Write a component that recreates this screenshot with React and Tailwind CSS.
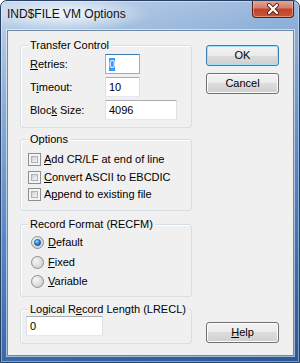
import React from "react";

const Field = ({ className = "", focused = false, children }) => (
  <div
    className={`h-[20px] flex items-center pl-[3px] bg-white border ${
      focused
        ? "border-[#7eb4ea] border-t-[#3d7bad]"
        : "border-[#dbdfe6] border-t-[#abadb3] border-b-[#e3e9ef]"
    } ${className}`}
  >
    {children}
  </div>
);

const Group = ({ label, className = "", children }) => (
  <div
    className={`relative w-[172px] rounded-[3px] border border-[#d5dfe5] shadow-[inset_1px_1px_0_#fff] ${className}`}
  >
    <span className="absolute -top-[7px] left-[7px] px-[2px] bg-[#f0f0f0] leading-[13px] whitespace-nowrap">
      {label}
    </span>
    {children}
  </div>
);

const Button = ({ primary = false, children }) => (
  <div
    className={`h-[21px] w-[73px] rounded-[3px] border flex items-center justify-center leading-[13px] ${
      primary
        ? "border-[#3c7fb1] shadow-[inset_0_0_0_1px_#9ee3fb]"
        : "border-[#707070] shadow-[inset_0_0_0_1px_#fcfcfc]"
    } bg-[linear-gradient(to_bottom,#f2f2f2_0%,#ebebeb_50%,#dddddd_50%,#cfcfcf_100%)]`}
  >
    {children}
  </div>
);

const CheckBox = () => (
  <div className="w-[13px] h-[13px] border border-[#8e8f8f] bg-[#f4f4f4] p-[2px]">
    <div className="w-full h-full border border-[#aeb3b9] bg-[linear-gradient(135deg,#cbcfd5,#f7f7f7)]" />
  </div>
);

const Radio = ({ checked }) => (
  <svg width="13" height="13" viewBox="0 0 13 13">
    <defs>
      <radialGradient id="rbg" cx="0.35" cy="0.35" r="0.8">
        <stop offset="0" stopColor="#f6f6f6" />
        <stop offset="1" stopColor="#c9cbce" />
      </radialGradient>
      <radialGradient id="rdot" cx="0.4" cy="0.35" r="0.7">
        <stop offset="0" stopColor="#a6e0ff" />
        <stop offset="0.5" stopColor="#2d8ad8" />
        <stop offset="1" stopColor="#0d4a8f" />
      </radialGradient>
    </defs>
    <circle cx="6.5" cy="6.5" r="6" fill="url(#rbg)" stroke="#8e8f8f" />
    {checked && <circle cx="6.5" cy="6.5" r="3.2" fill="url(#rdot)" stroke="#1f5ea6" strokeWidth="0.6" />}
  </svg>
);

export default function App() {
  return (
    <div className="w-[300px] h-[363px] flex flex-col rounded-t-[7px] border border-[#263f63] shadow-[inset_0_0_0_1px_rgba(255,255,255,0.4)] bg-[linear-gradient(165deg,#c4d6eb_0%,#8fb1d9_22%,#5686c3_55%,#3465a5_85%,#2b5897_100%)] font-['Liberation_Sans',Arial,sans-serif] text-[11px] text-black overflow-hidden">
      {/* title bar */}
      <div className="h-[29px] flex items-start justify-between bg-[radial-gradient(ellipse_85px_18px_at_65px_13px,rgba(255,255,255,0.85),rgba(255,255,255,0))]">
        <span className="pl-[6px] pt-[6px] text-[12px] leading-[14px] text-[#111]">IND$FILE VM Options</span>
        <div className="-mt-px mr-[5px] w-[42px] h-[18px] rounded-b-[4px] border border-[#5a1e14] border-t-0 shadow-[inset_0_0_0_1px_rgba(255,200,180,0.5)] bg-[linear-gradient(to_bottom,#e6a898_0%,#d6806a_45%,#c0432a_55%,#c8553a_100%)] flex items-center justify-center">
          <svg width="14" height="12" viewBox="0 0 14 12">
            <path d="M3 2 L11 10 M11 2 L3 10" stroke="#5b2016" strokeWidth="4" strokeLinecap="round" />
            <path d="M3 2 L11 10 M11 2 L3 10" stroke="#ffffff" strokeWidth="2.3" strokeLinecap="round" />
          </svg>
        </div>
      </div>

      {/* client area */}
      <div className="flex-1 ml-[6px] mr-[5px] mb-[6px] border border-[#6f88a8] shadow-[0_0_0_1px_rgba(255,255,255,0.55)] bg-[#f0f0f0] flex">
        <div className="pl-[12px] pt-[14px] flex flex-col">
          <Group label="Transfer Control" className="h-[83px]">
            <div className="pt-[8px] pl-[9px] flex flex-col gap-[3px]">
              <div className="flex items-center h-[20px]">
                <span className="w-[75px]"><u>R</u>etries:</span>
                <Field focused className="w-[35px]">
                  <span className="bg-[#3399ff] text-white leading-[13px]">0</span>
                </Field>
              </div>
              <div className="flex items-center h-[20px]">
                <span className="w-[75px]">T<u>i</u>meout:</span>
                <Field className="w-[35px]">10</Field>
              </div>
              <div className="flex items-center h-[20px]">
                <span className="w-[75px]">Bloc<u>k</u> Size:</span>
                <Field className="w-[72px]">4096</Field>
              </div>
            </div>
          </Group>

          <Group label="Options" className="h-[72px] mt-[11px]">
            <div className="pt-[13px] pl-[7px] flex flex-col">
              <div className="flex items-center h-[13px] gap-[3px]">
                <CheckBox />
                <span><u>A</u>dd CR/LF at end of line</span>
              </div>
              <div className="flex items-center h-[13px] gap-[3px] mt-[5px]">
                <CheckBox />
                <span><u>C</u>onvert ASCII to EBCDIC</span>
              </div>
              <div className="flex items-center h-[13px] gap-[3px] mt-[4px]">
                <CheckBox />
                <span>A<u>p</u>pend to existing file</span>
              </div>
            </div>
          </Group>

          <Group label="Record Format (RECFM)" className="h-[73px] mt-[13px]">
            <div className="pt-[11px] pl-[10px] flex flex-col">
              <div className="flex items-center h-[13px] gap-[4px]">
                <Radio checked />
                <span><u>D</u>efault</span>
              </div>
              <div className="flex items-center h-[13px] gap-[4px] mt-[7px]">
                <Radio />
                <span><u>F</u>ixed</span>
              </div>
              <div className="flex items-center h-[13px] gap-[4px] mt-[6px]">
                <Radio />
                <span><u>V</u>ariable</span>
              </div>
            </div>
          </Group>

          <Group label={<>Logical R<u>e</u>cord Length (LRECL)</>} className="h-[35px] mt-[12px]">
            <div className="pt-[6px] pl-[5px]">
              <Field className="w-[77px]">0</Field>
            </div>
          </Group>
        </div>

        <div className="ml-[14px] pt-[14px] pb-[12px] flex flex-col">
          <Button primary>OK</Button>
          <div className="mt-[7px]">
            <Button>Cancel</Button>
          </div>
          <div className="mt-auto">
            <Button>
              <span><u>H</u>elp</span>
            </Button>
          </div>
        </div>
      </div>
    </div>
  );
}
